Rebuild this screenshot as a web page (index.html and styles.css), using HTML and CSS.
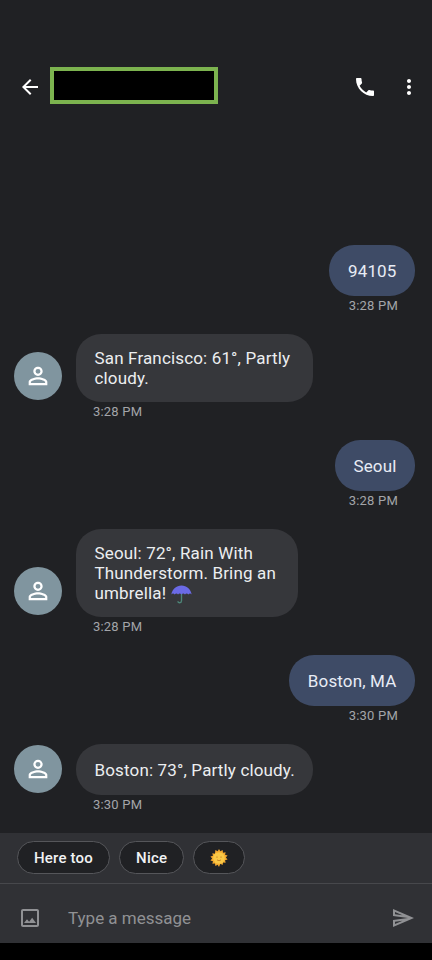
FILE: index.html
```html
<!DOCTYPE html>
<html lang="en">
<head>
<meta charset="utf-8">
<title>Messages</title>
<link rel="stylesheet" href="styles.css">
</head>
<body>
<div class="app">
  <header class="topbar">
    <svg class="back" viewBox="0 0 24 24"><path d="M20 11H7.83l5.59-5.59L12 4l-8 8 8 8 1.41-1.41L7.83 13H20v-2z"/></svg>
    <div class="redact"></div>
    <svg class="phone" viewBox="0 0 24 24"><path d="M6.62 10.79c1.44 2.83 3.76 5.14 6.59 6.59l2.2-2.2c.27-.27.67-.36 1.02-.24 1.12.37 2.33.57 3.57.57.55 0 1 .45 1 1V20c0 .55-.45 1-1 1-9.39 0-17-7.61-17-17 0-.55.45-1 1-1h3.5c.55 0 1 .45 1 1 0 1.25.2 2.45.57 3.57.11.35.03.74-.25 1.02l-2.2 2.2z"/></svg>
    <svg class="more" viewBox="0 0 24 24"><path d="M12 8c1.1 0 2-.9 2-2s-.9-2-2-2-2 .9-2 2 .9 2 2 2zm0 2c-1.1 0-2 .9-2 2s.9 2 2 2 2-.9 2-2-.9-2-2-2zm0 6c-1.1 0-2 .9-2 2s.9 2 2 2 2-.9 2-2-.9-2-2-2z"/></svg>
  </header>

  <main class="thread">
    <div class="msg sent">
      <div class="bubble">94105</div>
      <div class="time">3:28 PM</div>
    </div>
    <div class="msg recv">
      <div class="line">
        <div class="avatar"><svg viewBox="0 0 24 24"><path d="M12 5.9a2.1 2.1 0 1 1 0 4.2 2.1 2.1 0 0 1 0-4.2m0 9c2.97 0 6.1 1.46 6.1 2.1v1.1H5.9V17c0-.64 3.13-2.1 6.1-2.1M12 4C9.79 4 8 5.79 8 8s1.79 4 4 4 4-1.79 4-4-1.79-4-4-4zm0 9c-2.67 0-8 1.34-8 4v3h16v-3c0-2.66-5.33-4-8-4z"/></svg></div>
        <div class="bubble b-sf">San Francisco: 61°, Partly cloudy.</div>
      </div>
      <div class="time">3:28 PM</div>
    </div>
    <div class="msg sent">
      <div class="bubble">Seoul</div>
      <div class="time">3:28 PM</div>
    </div>
    <div class="msg recv">
      <div class="line">
        <div class="avatar"><svg viewBox="0 0 24 24"><path d="M12 5.9a2.1 2.1 0 1 1 0 4.2 2.1 2.1 0 0 1 0-4.2m0 9c2.97 0 6.1 1.46 6.1 2.1v1.1H5.9V17c0-.64 3.13-2.1 6.1-2.1M12 4C9.79 4 8 5.79 8 8s1.79 4 4 4 4-1.79 4-4-1.79-4-4-4zm0 9c-2.67 0-8 1.34-8 4v3h16v-3c0-2.66-5.33-4-8-4z"/></svg></div>
        <div class="bubble b-seoul">Seoul: 72°, Rain With Thunderstorm. Bring an umbrella! <svg class="umbrella" viewBox="0 0 20 20"><path class="um-stick" d="M10 2v14c0 2.4-3.4 2.4-3.4.4"/><path class="um-top" d="M10 1.500C5 1.500 1.300 5 .3 10c1-1.200 2.300-1.200 3.200 0 1-1.200 2.300-1.200 3.200 0 1-1.200 2.300-1.200 3.300 0 1-1.200 2.300-1.200 3.300 0 1-1.200 2.300-1.200 3.200 0 1-1.200 2.300-1.200 3.200 0C18.700 5 15 1.500 10 1.500z"/></svg></div>
      </div>
      <div class="time">3:28 PM</div>
    </div>
    <div class="msg sent">
      <div class="bubble">Boston, MA</div>
      <div class="time">3:30 PM</div>
    </div>
    <div class="msg recv">
      <div class="line">
        <div class="avatar"><svg viewBox="0 0 24 24"><path d="M12 5.9a2.1 2.1 0 1 1 0 4.2 2.1 2.1 0 0 1 0-4.2m0 9c2.97 0 6.1 1.46 6.1 2.1v1.1H5.9V17c0-.64 3.13-2.1 6.1-2.1M12 4C9.79 4 8 5.79 8 8s1.79 4 4 4 4-1.79 4-4-1.79-4-4-4zm0 9c-2.67 0-8 1.34-8 4v3h16v-3c0-2.66-5.33-4-8-4z"/></svg></div>
        <div class="bubble">Boston: 73°, Partly cloudy.</div>
      </div>
      <div class="time">3:30 PM</div>
    </div>
  </main>

  <section class="chips">
    <div class="chip">Here too</div>
    <div class="chip">Nice</div>
    <div class="chip emoji-chip"><svg class="sun" viewBox="0 0 20 20"><path class="sun-rays" d="M10 0l1.500 2.600L14 1.200l.5 2.900 2.900-.5-.7 2.800 2.800.9-1.900 2.200 1.900 2.200-2.800.9.700 2.800-2.900-.5-.5 2.900-2.500-1.400L10 20l-1.500-2.500L6 18.900l-.5-2.900-2.900.5.700-2.800-2.800-.9 1.900-2.200L.5 8.400l2.800-.9-.7-2.800 2.900.5L6 1.200l2.500 1.400z"/><circle class="sun-face" cx="10" cy="10" r="6.500"/><path class="sun-smile" d="M7 9h1.500M11.500 9H13M7.800 12c1.200 1.200 3.200 1.200 4.400 0"/></svg></div>
  </section>

  <footer class="composer">
    <svg class="image-icon" viewBox="0 0 24 24"><path d="M19 5v14H5V5h14m0-2H5c-1.100 0-2 .9-2 2v14c0 1.100.9 2 2 2h14c1.100 0 2-.9 2-2V5c0-1.100-.9-2-2-2zm-4.860 8.860l-3 3.870L9 13.140 6 17h12l-3.860-5.140z"/></svg>
    <div class="placeholder">Type a message</div>
    <svg class="send" viewBox="0 0 24 24"><path d="M4.010 6.030l7.510 3.220-7.520-1 .01-2.220m7.500 8.720L4 17.970v-2.220l7.510-1M2.010 3L2 10l15 2-15 2 .01 7L23 12 2.010 3z"/></svg>
  </footer>
  <div class="navbar"></div>
</div>
</body>
</html>
```
FILE: styles.css
```css
* { box-sizing: border-box; }
html, body { margin: 0; padding: 0; }
body {
  width: 432px;
  height: 960px;
  overflow: hidden;
  background: #202124;
  font-family: Roboto, "Liberation Sans", sans-serif;
  color: #e8eaed;
}
.app { display: flex; flex-direction: column; height: 960px; }

.topbar {
  display: flex;
  align-items: center;
  height: 37px;
  margin: 67px 0 0;
  padding: 0 11px 0 18px;
  flex: none;
}
.topbar svg { fill: #fff; flex: none; margin-top: 3px; }
.back { width: 24px; height: 24px; }
.redact {
  width: 168px;
  height: 37px;
  margin-left: 8px;
  background: #000;
  border: 4px solid #7cb34f;
}
.phone { width: 24px; height: 24px; margin-left: auto; }
.more { width: 24px; height: 24px; margin-left: 20px; }

.thread {
  flex: 1;
  min-height: 0;
  display: flex;
  flex-direction: column;
  padding-top: 141px;
}
.msg { display: flex; flex-direction: column; margin-bottom: 20px; }
.sent { align-items: flex-end; padding-right: 17px; }
.recv { align-items: flex-start; padding-left: 14px; }
.line { display: flex; align-items: flex-end; gap: 14px; }
.bubble {
  font-size: 17px;
  line-height: 20px;
  letter-spacing: 0.15px;
  padding: 16px 18.500px 15px;
  border-radius: 25px;
  background: #36373b;
  color: #eceef0;
}
.sent .bubble { background: #3e4b66; color: #e8ecf5; }
.b-sf { width: 237px; padding-top: 14px; padding-bottom: 14px; }
.b-seoul { width: 222px; padding-top: 14px; padding-bottom: 14px; }
.time {
  font-size: 13px;
  line-height: 16px;
  letter-spacing: 0.2px;
  color: #a3a5a9;
  margin-top: 2px;
}
.sent .time { padding-right: 17px; }
.recv .time { margin-left: 79px; }
.avatar {
  width: 48px;
  height: 48px;
  margin-bottom: 2px;
  border-radius: 50%;
  background: #80959f;
  display: flex;
  align-items: center;
  justify-content: center;
  flex: none;
}
.avatar svg { width: 28px; height: 28px; fill: #fff; }
.umbrella { width: 21px; height: 21px; margin: -4px 0; vertical-align: -2px; }
.um-stick { fill: none; stroke: #4d8577; stroke-width: 1.300; }
.um-top { fill: #6b6ae6; }

.chips {
  flex: none;
  display: flex;
  gap: 9px;
  align-items: center;
  height: 51px;
  padding: 0 17px 1px;
  background: #303135;
  border-bottom: 1px solid #47484c;
}
.chip {
  height: 33px;
  padding: 0 16px;
  display: flex;
  align-items: center;
  border-radius: 17px;
  background: #202124;
  border: 1px solid #55565a;
  font-size: 15px;
  font-weight: 500;
  letter-spacing: 0.2px;
  color: #f1f3f4;
}
.sun { width: 18px; height: 18px; }
.sun-rays { fill: #f2a72e; }
.sun-face { fill: #f9c846; }
.sun-smile { fill: none; stroke: #b36a1c; stroke-width: .8; }

.composer {
  flex: none;
  display: flex;
  align-items: center;
  height: 59px;
  padding: 9px 17px 0 18px;
  background: #303135;
}
.composer svg { fill: #909194; flex: none; }
.image-icon { width: 24px; height: 24px; }
.placeholder { flex: 1; margin-left: 26px; font-size: 17px; color: #909194; }
.send { width: 24px; height: 24px; }
.navbar { flex: none; height: 17px; background: #000; }
```
